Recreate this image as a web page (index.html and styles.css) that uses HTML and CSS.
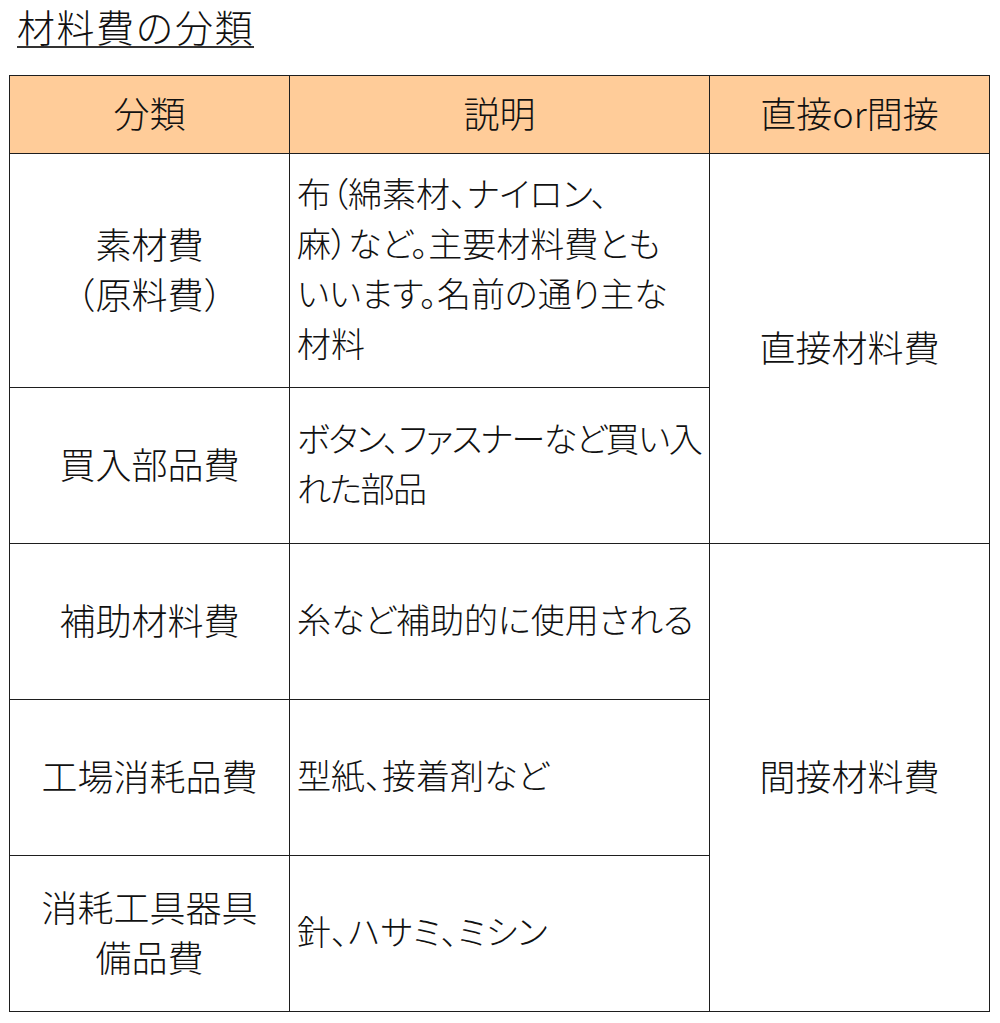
FILE: index.html
```html
<!DOCTYPE html>
<html lang="ja">
<head>
<meta charset="utf-8">
<link rel="stylesheet" href="styles.css">
</head>
<body>
<h1 class="title">材料費の分類</h1>
<table class="grid">
  <colgroup>
    <col class="c1"><col class="c2"><col class="c3">
  </colgroup>
  <thead>
    <tr class="r-head">
      <th>分類</th>
      <th>説明</th>
      <th>直接or間接</th>
    </tr>
  </thead>
  <tbody>
    <tr class="r-tall">
      <td class="center">素材費<br>（原料費）</td>
      <td class="desc">布（綿素材、ナイロン、<br>麻）など。主要材料費とも<br>いいます。名前の通り主な<br>材料</td>
      <td class="center" rowspan="2">直接材料費</td>
    </tr>
    <tr class="r-std">
      <td class="center">買入部品費</td>
      <td class="desc tight">ボタン、ファスナーなど買い入<br>れた部品</td>
    </tr>
    <tr class="r-std">
      <td class="center">補助材料費</td>
      <td class="desc">糸など補助的に使用される</td>
      <td class="center" rowspan="3">間接材料費</td>
    </tr>
    <tr class="r-std">
      <td class="center">工場消耗品費</td>
      <td class="desc">型紙、接着剤など</td>
    </tr>
    <tr class="r-std">
      <td class="center">消耗工具器具<br>備品費</td>
      <td class="desc">針、ハサミ、ミシン</td>
    </tr>
  </tbody>
</table>
</body>
</html>
```
FILE: styles.css
```css
html, body {
  margin: 0;
  padding: 0;
  background: #ffffff;
}
body {
  padding: 0 0 0 9px;
  font-family: "Noto Sans CJK JP", "Noto Sans", sans-serif;
  font-weight: 300;
  color: #111111;
}
.title {
  margin: 0;
  padding: 0 0 0 8px;
  height: 75px;
  box-sizing: border-box;
  font-size: 38px;
  font-weight: 300;
  line-height: 52px;
  letter-spacing: 1.5px;
  text-decoration: underline;
  text-decoration-thickness: 2px;
  text-underline-offset: 4px;
  text-decoration-color: #333;
}
.grid {
  border-collapse: collapse;
  table-layout: fixed;
  width: 981px;
  font-size: 36px;
  line-height: 50px;
}
.c1 { width: 280px; }
.c2 { width: 420px; }
.c3 { width: 280px; }
.grid th,
.grid td {
  border: 1px solid #1e1e1e;
  padding: 0 0 6px 0;
  font-weight: 300;
  vertical-align: middle;
}
.grid th {
  background: #ffcc99;
  text-align: center;
}
.r-head th { height: 71px; }
.r-tall td { height: 227px; }
.r-std td { height: 149px; }
.center {
  text-align: center;
  white-space: nowrap;
}
.desc {
  text-align: left;
  padding-left: 7px !important;
  white-space: nowrap;
  overflow: hidden;
  font-size: 34px;
  font-feature-settings: "palt";
}
.desc.tight {
  letter-spacing: -1.5px;
}
```
